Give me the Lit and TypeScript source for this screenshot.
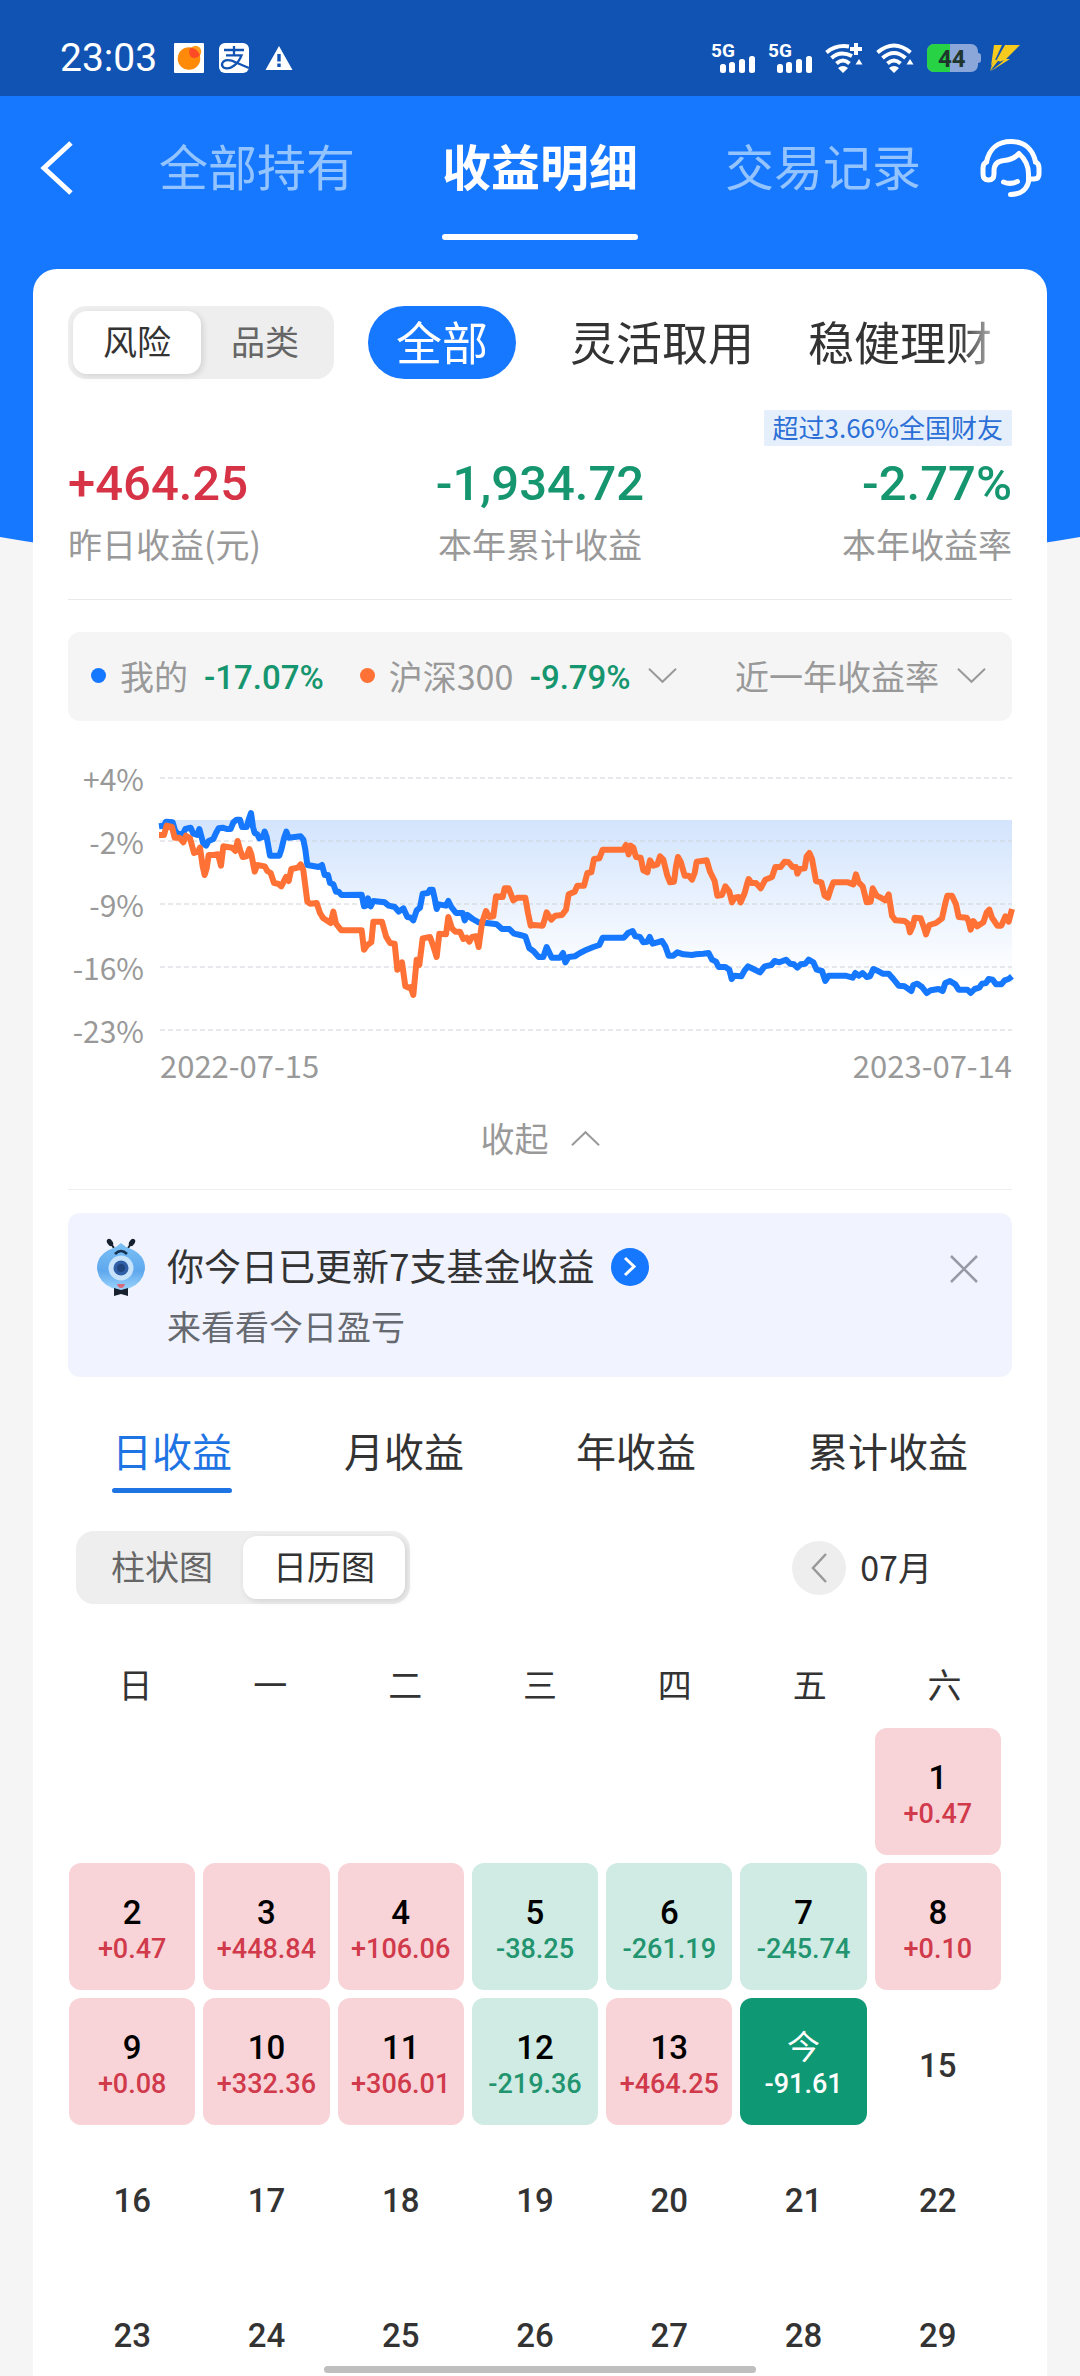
import { LitElement, html, css, svg, nothing } from "lit";
import { customElement, state } from "lit/decorators.js";
import { classMap } from "lit/directives/class-map.js";

type Day = { label: string; value?: string };

const blank = null;
const WEEKDAYS = ["日", "一", "二", "三", "四", "五", "六"];
const WEEKS: (Day | null)[][] = [
  [blank, blank, blank, blank, blank, blank, { label: "1", value: "+0.47" }],
  [
    { label: "2", value: "+0.47" },
    { label: "3", value: "+448.84" },
    { label: "4", value: "+106.06" },
    { label: "5", value: "-38.25" },
    { label: "6", value: "-261.19" },
    { label: "7", value: "-245.74" },
    { label: "8", value: "+0.10" },
  ],
  [
    { label: "9", value: "+0.08" },
    { label: "10", value: "+332.36" },
    { label: "11", value: "+306.01" },
    { label: "12", value: "-219.36" },
    { label: "13", value: "+464.25" },
    { label: "今", value: "-91.61" },
    { label: "15" },
  ],
  ["16", "17", "18", "19", "20", "21", "22"].map((label) => ({ label })),
  ["23", "24", "25", "26", "27", "28", "29"].map((label) => ({ label })),
];

// Both series share one plot space: x 300..2856, y 115 (+4%) .. 871 (-23%).
const MINE =
  "297,260 312,258 318,246 338,248 345,272 352,282 368,284 376,268 392,264 400,282 412,286 418,268 424,290 430,312 438,318 446,304 460,298 468,280 476,266 488,264 500,268 512,268 520,248 530,240 540,240 546,262 560,262 566,240 573,220 579,262 584,280 592,284 598,296 608,292 614,276 620,292 630,348 658,348 664,330 672,296 679,276 686,294 722,290 730,300 736,330 742,376 776,382 786,376 794,406 804,406 810,430 820,434 828,456 836,456 844,466 905,465 912,500 918,498 924,476 932,500 940,484 960,486 974,488 986,498 1004,502 1016,516 1030,506 1042,532 1052,534 1060,542 1070,512 1080,504 1088,462 1104,460 1110,450 1118,450 1124,476 1130,508 1136,494 1158,498 1165,484 1174,502 1188,520 1208,520 1214,542 1222,526 1238,538 1256,548 1280,550 1310,554 1326,568 1348,568 1362,582 1380,586 1396,590 1408,626 1420,634 1436,652 1450,652 1460,622 1475,654 1500,654 1509,640 1516,668 1526,652 1544,650 1560,640 1580,630 1600,622 1618,616 1628,594 1692,594 1704,580 1718,574 1726,590 1740,592 1750,608 1762,606 1769,592 1778,612 1792,608 1806,604 1816,620 1826,648 1840,648 1852,638 1870,644 1896,646 1908,644 1930,642 1946,640 1956,660 1968,666 1976,682 1996,682 2008,690 2015,718 2022,708 2044,710 2054,692 2064,680 2080,688 2100,698 2114,680 2134,676 2144,664 2158,668 2178,660 2190,672 2202,674 2212,684 2222,674 2236,672 2246,660 2260,668 2270,690 2286,694 2296,724 2306,708 2356,708 2378,714 2386,700 2396,708 2408,700 2420,712 2430,710 2440,688 2454,694 2468,702 2486,702 2500,718 2516,738 2534,740 2554,754 2560,736 2572,732 2586,742 2600,760 2612,752 2636,748 2648,754 2656,730 2670,724 2686,734 2696,750 2722,750 2732,760 2744,748 2758,744 2766,732 2778,730 2786,718 2798,720 2808,734 2824,734 2834,722 2846,718 2856,710";
const INDEX =
  "297,286 312,286 320,258 336,262 344,294 358,294 370,308 378,288 390,296 402,340 414,336 420,324 428,380 434,406 440,386 446,346 460,346 474,344 483,378 490,320 516,324 526,334 533,304 540,330 548,352 560,350 568,328 574,344 584,396 592,376 614,380 622,394 632,400 642,430 654,432 664,440 674,420 678,412 686,424 694,388 714,384 722,374 730,392 742,486 750,492 770,490 780,520 790,536 812,550 820,516 828,552 844,572 905,572 912,630 922,616 934,608 940,546 966,546 978,590 990,610 1004,612 1012,690 1018,686 1026,668 1036,740 1046,744 1052,742 1060,766 1070,660 1078,676 1088,596 1110,592 1120,620 1130,652 1138,582 1158,584 1165,532 1176,566 1186,576 1200,576 1210,598 1220,594 1228,606 1236,592 1248,590 1256,622 1266,550 1278,514 1288,532 1300,530 1308,470 1328,472 1334,446 1346,446 1360,482 1372,474 1396,474 1404,520 1412,558 1420,556 1448,558 1454,540 1460,518 1474,540 1486,528 1506,526 1518,510 1526,464 1544,456 1552,438 1572,438 1582,400 1594,398 1602,358 1618,356 1628,330 1690,330 1698,316 1706,344 1712,318 1720,324 1728,352 1742,354 1750,392 1762,398 1770,362 1780,378 1792,374 1800,350 1810,360 1822,408 1830,428 1842,426 1848,380 1854,352 1862,366 1874,408 1886,408 1896,420 1904,400 1910,366 1940,362 1950,396 1964,424 1972,468 1986,466 1996,440 2008,456 2016,488 2024,474 2036,472 2042,488 2054,460 2062,430 2066,418 2074,430 2088,430 2102,446 2116,420 2136,412 2146,382 2162,382 2174,366 2186,368 2198,382 2208,382 2212,402 2220,388 2234,386 2240,350 2248,340 2256,358 2268,424 2284,428 2294,468 2304,474 2312,448 2320,428 2364,428 2380,434 2388,404 2396,428 2408,440 2420,488 2432,486 2438,446 2450,468 2462,474 2476,482 2486,464 2496,528 2506,542 2534,544 2544,552 2550,578 2558,560 2564,534 2582,536 2592,564 2598,584 2608,556 2628,550 2646,536 2656,490 2662,468 2676,468 2688,494 2696,532 2720,534 2726,546 2732,570 2740,544 2752,560 2770,548 2780,518 2788,510 2796,534 2812,558 2824,558 2836,530 2846,546 2856,508";

const chevron = (dir: "down" | "up") => html`<svg class="chevron" viewBox="0 0 30 17" aria-hidden="true">
  <path d=${dir === "down" ? "M1 1.500L15 15L29 1.500" : "M1 15.500L15 2L29 15.500"} />
</svg>`;

const signal = svg`
  <text class="net" x="0" y="14">5G</text>
  <rect x="9" y="21" width="6" height="9" rx="2.500"/>
  <rect x="18" y="19" width="6" height="11" rx="2.500"/>
  <rect x="28" y="16" width="6" height="14" rx="2.500"/>
  <rect x="38" y="13" width="6" height="17" rx="2.500"/>`;

const wifi = (plus: boolean) => html`<svg class="wifi" viewBox="0 0 38 30" aria-hidden="true">
  <g fill="none" stroke="#fff" stroke-width="4">
    <path d=${plus ? "M1.500 9.500Q11 1.500 24 3.500" : "M1.500 9.500Q18 -4.500 34.500 9.500"} />
    <path d=${plus ? "M6.500 15Q15 7 27 13" : "M6.500 15Q18 5 29.500 15"} />
    <path d="M11.500 20.500Q18 14.500 24.500 20.500" />
    ${plus ? svg`<path d="M31 0V12M25 6H37"/>` : nothing}
  </g>
  <path fill="#fff" d="M13 25Q18 21 23 25L18 30ZM30.500 21.500L34 16L37.500 21.500Z" />
</svg>`;

@customElement("app-root")
export class AppRoot extends LitElement {
  @state() private group = "风险";
  @state() private view = "日历图";
  @state() private period = "日收益";

  static styles = css`
    :host {
      display: block;
      position: relative;
      height: 100vh;
      overflow: hidden;
      background: #f5f5f5;
      color: #333;
      font-family: "Noto Sans CJK SC", sans-serif;
      font-size: 34px;
      line-height: 48px;
    }
    * { box-sizing: border-box; }
    button, select {
      margin: 0;
      padding: 0;
      border: 0;
      background: none;
      color: inherit;
      font: inherit;
      appearance: none;
      white-space: nowrap;
    }
    svg { display: block; flex: none; overflow: visible; }

    .status {
      display: flex;
      align-items: center;
      height: 96px;
      padding: 20px 60px 0;
      background: #1153b3;
      color: #fff;
    }
    .time { font-family: Roboto, sans-serif; font-size: 39px; margin-right: 17px; }
    .notices { display: flex; gap: 15px; }
    .notices svg { width: 30px; height: 30px; }
    .radios { display: flex; align-items: center; margin-left: auto; gap: 13px; }
    .signal { width: 44px; height: 30px; fill: #fff; }
    .net { font: 700 19px Roboto, sans-serif; }
    .wifi { width: 38px; height: 30px; }
    .battery { width: 50px; height: 28px; }
    .charge { font: 700 24px Roboto, sans-serif; fill: #20352e; }
    .bolt { width: 30px; height: 26px; }

    .page { position: relative; }
    .hero {
      position: absolute;
      inset: 0 0 auto;
      height: 485px;
      background: #1677ff;
      clip-path: ellipse(120% 100% at 50% 0);
    }
    .nav {
      position: relative;
      display: grid;
      grid-template-columns: 1fr auto 1fr;
      height: 173px;
      padding: 0 39px;
      color: #fff;
    }
    .nav-tabs { display: flex; gap: 87px; height: 144px; }
    .nav-tab {
      display: flex;
      flex-direction: column;
      font-size: 49px;
      color: #94c4ff;
    }
    .nav-tab span { display: flex; flex: 1; align-items: center; }
    .nav-tab::after { content: ""; height: 6px; width: 100%; border-radius: 3px; }
    .nav-tab.on { color: #fff; font-weight: 700; }
    .nav-tab.on::after { background: #fff; }
    .icon-btn { height: 144px; display: flex; align-items: center; }
    .nav .icon-btn:last-child { justify-self: end; }
    .icon-btn svg { fill: none; stroke: #fff; stroke-width: 5; }
    .back svg { width: 34px; height: 54px; }
    .help svg { width: 60px; height: 58px; stroke-linecap: round; stroke-linejoin: round; }

    .card {
      position: relative;
      margin: 0 33px;
      padding: 37px 35px 0;
      background: #fff;
      border-radius: 24px 24px 0 0;
    }
    .filters { display: flex; gap: 34px; }
    .segment {
      display: flex;
      flex: none;
      padding: 5px;
      border-radius: 18px;
      background: #eee;
    }
    .segment button {
      height: 63px;
      padding: 0 30px 4px;
      border-radius: 14px;
      color: #666;
    }
    .segment button.on {
      background: #fff;
      color: #333;
      box-shadow: 2px 2px 6px rgba(0, 0, 0, 0.12);
    }
    .chips {
      display: flex;
      flex: 1;
      min-width: 0;
      gap: 54px;
      overflow: hidden;
      font-size: 46px;
      mask-image: linear-gradient(90deg, #000 calc(100% - 52px), transparent);
    }
    .chips button { height: 73px; padding-bottom: 5px; }
    .chips .on {
      padding: 0 28px 5px;
      border-radius: 37px;
      background: #1677ff;
      color: #fff;
    }

    .stats {
      display: grid;
      grid-template-columns: 1fr auto 1fr;
      align-items: end;
      margin-top: 31px;
      padding-bottom: 31px;
      border-bottom: 1px solid #e9e9e9;
      color: #999;
    }
    .stat { display: flex; flex-direction: column; }
    .stat:nth-child(2) { align-items: center; }
    .stat:nth-child(3) { align-items: flex-end; }
    .badge {
      margin-bottom: 6px;
      padding: 0 9px 3px;
      border-radius: 2px;
      background: #e5effb;
      color: #2c6fd6;
      font-size: 26px;
      line-height: 33px;
    }
    .amount {
      margin-bottom: 6px;
      padding-top: 2px;
      font: 500 49px/60px Roboto, sans-serif;
    }
    .up { color: #d63347; }
    .down { color: #16966f; }

    .legend {
      display: flex;
      align-items: center;
      height: 89px;
      margin-top: 32px;
      padding: 0 26px 2px 23px;
      border-radius: 12px;
      background: #f5f5f5;
      color: #999;
    }
    .series { display: flex; align-items: center; }
    .series + .series { margin-left: 36px; }
    .series .rate { margin-left: 16px; padding-top: 4px; font: 500 33px/48px Roboto, sans-serif; }
    .series .chevron { margin-left: 17px; }
    .dot { width: 15px; height: 15px; margin-right: 14px; border-radius: 50%; }
    .dot.mine { background: #1677ff; }
    .dot.index { background: #ff7134; }
    .range { display: flex; align-items: center; gap: 18px; margin-left: auto; }
    .chevron { width: 29px; height: 17px; fill: none; stroke: #999; stroke-width: 2; }

    .chart {
      display: grid;
      grid-template-columns: 76px 1fr;
      gap: 0 16px;
      padding-top: 42px;
      color: #999;
      font-size: 30px;
      line-height: 30px;
    }
    .axis {
      display: flex;
      flex-direction: column;
      justify-content: space-between;
      align-items: flex-end;
      height: 282px;
    }
    .plot { width: 100%; height: 252px; margin: 15px 0; }
    .plot * { vector-effect: non-scaling-stroke; }
    .grid { stroke: #cfd2da; stroke-width: 1; stroke-dasharray: 5 3; }
    .line { fill: none; stroke-width: 6; stroke-linejoin: round; }
    .line.mine { stroke: #1677ff; }
    .line.index { stroke: #ff7134; }
    .dates {
      grid-column: 2;
      display: flex;
      justify-content: space-between;
      margin-top: 2px;
      font-size: 31px;
      line-height: 36px;
    }
    .fold {
      display: flex;
      align-items: center;
      justify-content: center;
      gap: 22px;
      width: 100%;
      margin-top: 31px;
      color: #999;
    }
    .fold-wrap { padding-bottom: 27px; border-bottom: 1px solid #eee; }

    .notice {
      display: flex;
      align-items: flex-start;
      margin-top: 23px;
      padding: 26px 34px 27px 29px;
      border-radius: 12px;
      background: #f1f4ff;
    }
    .mascot { width: 48px; height: 58px; margin-right: 22px; }
    .notice-text { flex: 1; }
    .notice-title { display: flex; align-items: center; gap: 16px; font-size: 37px; line-height: 52px; }
    .notice-title svg { width: 38px; height: 38px; margin-top: 4px; }
    .notice-sub { margin-top: 11px; color: #666a70; }
    .close { height: 60px; }
    .close svg { width: 28px; height: 28px; fill: none; stroke: #979aa5; stroke-width: 2.500; }

    .periods {
      display: flex;
      justify-content: space-between;
      margin-top: 45px;
      padding: 0 44px;
      font-size: 40px;
      line-height: 56px;
    }
    .periods button { display: flex; flex-direction: column; gap: 10px; }
    .periods button::after { content: ""; width: 100%; height: 5px; border-radius: 3px; }
    .periods .on { color: #1f74e4; }
    .periods .on::after { background: #1f74e4; }

    .tools {
      display: flex;
      align-items: center;
      justify-content: space-between;
      margin-top: 38px;
      padding: 0 80px 0 8px;
    }
    .month { display: flex; align-items: center; gap: 14px; }
    .prev {
      display: grid;
      place-items: center;
      width: 54px;
      height: 54px;
      border-radius: 50%;
      background: #eee;
    }
    .prev svg { width: 16px; height: 30px; fill: none; stroke: #999; stroke-width: 2.500; }
    .month-name { padding-bottom: 2px; }

    table, thead, tbody { display: block; }
    .calendar { margin-top: 56px; }
    .calendar tr { display: grid; grid-template-columns: repeat(7, minmax(0, 1fr)); }
    .calendar th, .calendar td { padding: 0; font-weight: 400; text-align: center; }
    .calendar tbody { padding: 20px 11px 0 1px; }
    .calendar tbody tr { column-gap: 8px; margin-bottom: 8px; }
    .calendar td {
      display: flex;
      flex-direction: column;
      justify-content: center;
      height: 127px;
      padding-top: 8px;
      border-radius: 12px;
      font: 500 33px/36px Roboto, "Noto Sans CJK SC", sans-serif;
    }
    .calendar td.gain { background: #f8d4d8; color: #000; }
    .calendar td.loss { background: #d0ebe3; color: #000; }
    .calendar td.today { background: #0f9874; color: #fff; font-weight: 400; }
    .delta { font-size: 27px; font-weight: 500; }
    .gain .delta { color: #d03a4b; }
    .loss .delta { color: #22946f; }

    .home-bar {
      position: absolute;
      bottom: 3px;
      left: 30%;
      right: 30%;
      height: 7px;
      border-radius: 4px;
      background: #bfbfbf;
    }
  `;

  private segment(items: string[], current: string, pick: (v: string) => void) {
    return html`<div class="segment">
      ${items.map(
        (t) => html`<button class=${classMap({ on: t === current })} aria-pressed=${t === current} @click=${() => pick(t)}>${t}</button>`
      )}
    </div>`;
  }

  private statusBar() {
    return html`<div class="status">
      <span class="time">23:03</span>
      <div class="notices">
        <svg viewBox="0 0 30 30" aria-hidden="true">
          <rect width="30" height="30" rx="1" fill="#fff" />
          <circle cx="21.500" cy="8.500" r="5.800" fill="#ff9d1e" />
          <circle cx="15" cy="15.500" r="11.300" fill="#ff8a0a" />
          <path d="M16 5Q22 4 26 12Q22 17 17 14Q14 11 16 5Z" fill="#ff4a26" />
        </svg>
        <svg viewBox="0 0 30 30" aria-hidden="true">
          <rect width="30" height="30" rx="6" fill="#fff" />
          <g fill="none" stroke="#1153b3" stroke-width="2.300">
            <path d="M5 7H25M15 3V12M7 12.300H22.500Q20 19 14.500 23Q9 27 4.500 24.500Q1.500 21.500 4.500 18.500Q9 15.500 17 19.500L30 25" />
          </g>
        </svg>
        <svg viewBox="0 0 30 30" aria-hidden="true">
          <path d="M15 3L28.500 27H1.500Z" fill="#fff" />
          <path d="M13.300 11H16.700V18.500H13.300ZM13.300 20.500H16.700V24H13.300Z" fill="#1153b3" />
        </svg>
      </div>
      <div class="radios">
        <svg class="signal" viewBox="0 0 44 30">${signal}</svg>
        <svg class="signal" viewBox="0 0 44 30">${signal}</svg>
        ${wifi(true)} ${wifi(false)}
        <svg class="battery" viewBox="0 0 50 28">
          <path d="M7 0H44A7 7 0 0 1 51 7V9Q54 9 54 12V16Q54 19 51 19V21A7 7 0 0 1 44 28H7A7 7 0 0 1 0 21V7A7 7 0 0 1 7 0Z" fill="#8ba7d9" />
          <path d="M7 0H23V28H7A7 7 0 0 1 0 21V7A7 7 0 0 1 7 0Z" fill="#27d345" />
          <text class="charge" x="11" y="23">44</text>
        </svg>
        <svg class="bolt" viewBox="0 0 30 26" aria-hidden="true">
          <path d="M4 0H12L6 13L1 21Z" fill="#f7cb1d" />
          <path d="M15 0H30L16 14H20L1 26L10 16H6Z" fill="#f7cb1d" />
          <path d="M5 19L14 15L11 18L2 25Z" fill="#1153b3" />
          <path d="M0 26L4 14L8 16Z" fill="#f7cb1d" />
        </svg>
      </div>
    </div>`;
  }

  private chart() {
    return html`<div class="chart">
      <div class="axis">${["+4%", "-2%", "-9%", "-16%", "-23%"].map((t) => html`<span>${t}</span>`)}</div>
      <svg class="plot" viewBox="300 115 2556 756" preserveAspectRatio="none" role="img">
        <defs>
          <linearGradient id="fade" x1="0" x2="0" y1="240" y2="720" gradientUnits="userSpaceOnUse">
            <stop offset="0" stop-color="#d3e4fd" />
            <stop offset="1" stop-color="#fff" />
          </linearGradient>
          <clipPath id="below"><rect x="300" y="240" width="2556" height="640" /></clipPath>
        </defs>
        <polygon points="300,240 ${MINE} 2856,240" fill="url(#fade)" clip-path="url(#below)" />
        ${[115, 304, 493, 682, 871].map((y) => svg`<line class="grid" x1="300" x2="2856" y1=${y} y2=${y}/>`)}
        <polyline class="line mine" points=${MINE} />
        <polyline class="line index" points=${INDEX} />
      </svg>
      <div class="dates"><span>2022-07-15</span><span>2023-07-14</span></div>
    </div>`;
  }

  private cell(day: Day | null) {
    if (!day) return html`<td></td>`;
    const today = day.label === "今";
    const gain = !today && !!day.value?.startsWith("+");
    const loss = !today && !!day.value?.startsWith("-");
    return html`<td class=${classMap({ gain, loss, today })}>
      <span>${day.label}</span>${day.value ? html`<span class="delta">${day.value}</span>` : nothing}
    </td>`;
  }

  render() {
    return html`
      ${this.statusBar()}
      <div class="page">
        <div class="hero"></div>
        <nav class="nav">
          <button class="icon-btn back">
            <svg viewBox="0 0 34 54" aria-hidden="true"><path d="M32 2L5 27L32 52" /></svg>
          </button>
          <div class="nav-tabs">
            <button class="nav-tab"><span>全部持有</span></button>
            <button class="nav-tab on"><span>收益明细</span></button>
            <button class="nav-tab"><span>交易记录</span></button>
          </div>
          <button class="icon-btn help">
            <svg viewBox="0 0 60 58" aria-hidden="true">
              <path d="M5.500 23C8 10 17 2.500 30 2.500S52 10 54.500 23" />
              <path d="M5.500 23C3 24 2 26 2 29V35C2 39 4 41 7.500 41S13 39 13 35V32C13 25 17 22 23 21.500C29 21 34 19 38 14.500C44 20 47.500 27 47.500 35V40H53C56.500 40 58 38 58 35V29C58 26 57 24 54.500 23" />
              <path d="M48 40C47 50 40 55.500 29.500 55.500M22.500 43Q29.500 46 36.500 42.500" />
            </svg>
          </button>
        </nav>

        <main class="card">
          <div class="filters">
            ${this.segment(["风险", "品类"], this.group, (v) => (this.group = v))}
            <div class="chips">
              <button class="on">全部</button>
              <button>灵活取用</button>
              <button>稳健理财</button>
            </div>
          </div>

          <section class="stats">
            <div class="stat"><span class="amount up">+464.25</span><span>昨日收益(元)</span></div>
            <div class="stat"><span class="amount down">-1,934.72</span><span>本年累计收益</span></div>
            <div class="stat">
              <span class="badge">超过3.66%全国财友</span>
              <span class="amount down">-2.77%</span><span>本年收益率</span>
            </div>
          </section>

          <div class="legend">
            <div class="series"><i class="dot mine"></i><span>我的</span><span class="rate down">-17.07%</span></div>
            <label class="series">
              <i class="dot index"></i>
              <select><option>沪深300</option></select>
              <span class="rate down">-9.79%</span>${chevron("down")}
            </label>
            <label class="range">
              <select><option>近一年收益率</option></select>
              ${chevron("down")}
            </label>
          </div>

          ${this.chart()}
          <div class="fold-wrap"><button class="fold">收起${chevron("up")}</button></div>

          <section class="notice">
            <svg class="mascot" viewBox="0 0 48 58" aria-hidden="true">
              <defs>
                <linearGradient id="skin" x1="0" y1="0" x2="0" y2="1">
                  <stop offset="0" stop-color="#7cc0f5" /><stop offset="0.600" stop-color="#5fa8ee" /><stop offset="1" stop-color="#9bd4fb" />
                </linearGradient>
              </defs>
              <path d="M17 9L12 2M31 9L36 2" stroke="#16202e" stroke-width="2" />
              <ellipse cx="13" cy="3.500" rx="2.600" ry="4" transform="rotate(-35 13 3.500)" fill="#16202e" />
              <ellipse cx="35" cy="3.500" rx="2.600" ry="4" transform="rotate(35 35 3.500)" fill="#16202e" />
              <path d="M24 4Q28 8 34 10Q48 16 48 29Q47 43 33 49Q24 53 15 49Q1 43 0 29Q0 16 14 10Q20 8 24 4Z" fill="url(#skin)" />
              <path d="M18 15Q24 9 30 15" fill="none" stroke="#16304f" stroke-width="2.500" />
              <circle cx="24" cy="29" r="12.500" fill="#c6e3fb" />
              <circle cx="24" cy="29" r="7.500" fill="#2f5fa6" />
              <circle cx="24" cy="29" r="4" fill="#21457f" />
              <path d="M20 45H28Q27 49 24 49T20 45Z" fill="#d96a7c" />
              <path d="M17 49L24 51L31 49V57L24 55L17 57Z" fill="#16202e" />
            </svg>
            <div class="notice-text">
              <div class="notice-title">
                <span>你今日已更新7支基金收益</span>
                <svg viewBox="0 0 38 38" aria-hidden="true">
                  <circle cx="19" cy="19" r="19" fill="#1677ff" />
                  <path d="M14 10L23 18.500L14 27" fill="none" stroke="#fff" stroke-width="3" />
                </svg>
              </div>
              <div class="notice-sub">来看看今日盈亏</div>
            </div>
            <button class="close"><svg viewBox="0 0 28 28" aria-hidden="true"><path d="M1 1L27 27M27 1L1 27" /></svg></button>
          </section>

          <div class="periods">
            ${["日收益", "月收益", "年收益", "累计收益"].map(
              (t) => html`<button class=${classMap({ on: t === this.period })} @click=${() => (this.period = t)}>${t}</button>`
            )}
          </div>

          <div class="tools">
            ${this.segment(["柱状图", "日历图"], this.view, (v) => (this.view = v))}
            <div class="month">
              <button class="prev"><svg viewBox="0 0 16 30" aria-hidden="true"><path d="M15 1L2 15L15 29" /></svg></button>
              <span class="month-name">07月</span>
            </div>
          </div>

          <table class="calendar">
            <thead><tr>${WEEKDAYS.map((d) => html`<th scope="col">${d}</th>`)}</tr></thead>
            <tbody>${WEEKS.map((w) => html`<tr>${w.map((d) => this.cell(d))}</tr>`)}</tbody>
          </table>
        </main>
      </div>
      <div class="home-bar"></div>
    `;
  }
}
